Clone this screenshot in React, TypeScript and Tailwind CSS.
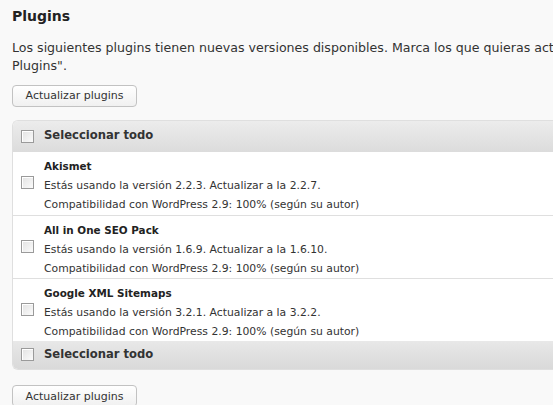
import React from "react";

const plugins = [
  { name: "Akismet", current: "2.2.3", next: "2.2.7" },
  { name: "All in One SEO Pack", current: "1.6.9", next: "1.6.10" },
  { name: "Google XML Sitemaps", current: "3.2.1", next: "3.2.2" },
];

const Box = () => (
  <span className="block w-[13px] h-[13px] shrink-0 border border-[#9a9a9a] bg-gradient-to-br from-[#e2e2e2] to-[#fbfbfb] shadow-[inset_1px_1px_0_#fff]" />
);

const UpdateButton = () => (
  <button className="h-[22px] w-[125px] rounded-[4px] border border-[#c2c2c2] bg-gradient-to-b from-white to-[#f0f0f0] text-[11px] text-[#333] leading-none">
    Actualizar plugins
  </button>
);

const SelectAllRow = ({ top }: { top: boolean }) => (
  <div
    className={`flex items-center gap-[10px] pl-[8px] bg-gradient-to-b ${
      top
        ? "h-[31px] from-[#ececec] to-[#dcdcdc] rounded-tl-[5px]"
        : "h-[28px] from-[#e8e8e8] to-[#d9d9d9] rounded-bl-[5px]"
    }`}
  >
    <Box />
    <span className="font-bold text-[11.6px] text-[#333]">Seleccionar todo</span>
  </div>
);

export default function App() {
  return (
    <div
      className="w-[553px] h-[405px] overflow-hidden bg-[#f9f9f9] text-[#333] pl-[12px]"
      style={{ fontFamily: '"DejaVu Sans", Verdana, sans-serif' }}
    >
      <h2 className="pt-[7px] text-[14px] font-bold text-[#222] leading-[18px]">Plugins</h2>
      <p className="mt-[14px] text-[12.6px] leading-[18px] whitespace-nowrap">
        Los siguientes plugins tienen nuevas versiones disponibles. Marca los que quieras actualizar y haz clic en "Actualizar
        <br />
        Plugins".
      </p>
      <div className="mt-[7px]">
        <UpdateButton />
      </div>
      <div className="mt-[13px] w-[560px] border border-r-0 border-[#dfdfdf] rounded-l-[6px] bg-white">
        <SelectAllRow top />
        {plugins.map((p, i) => (
          <div
            key={p.name}
            className={`flex items-start gap-[10px] pl-[8px] pt-[5px] h-[63px] ${
              i > 0 ? "border-t border-[#dfdfdf]" : ""
            }`}
          >
            <div className="mt-[19px]">
              <Box />
            </div>
            <div className="text-[10.8px] leading-[19px] whitespace-nowrap">
              <div className="font-bold text-[10.4px] text-[#222]">{p.name}</div>
              <div>
                Estás usando la versión {p.current}. Actualizar a la {p.next}.
              </div>
              <div>Compatibilidad con WordPress 2.9: 100% (según su autor)</div>
            </div>
          </div>
        ))}
        <SelectAllRow top={false} />
      </div>
      <div className="mt-[13px]">
        <UpdateButton />
      </div>
    </div>
  );
}
